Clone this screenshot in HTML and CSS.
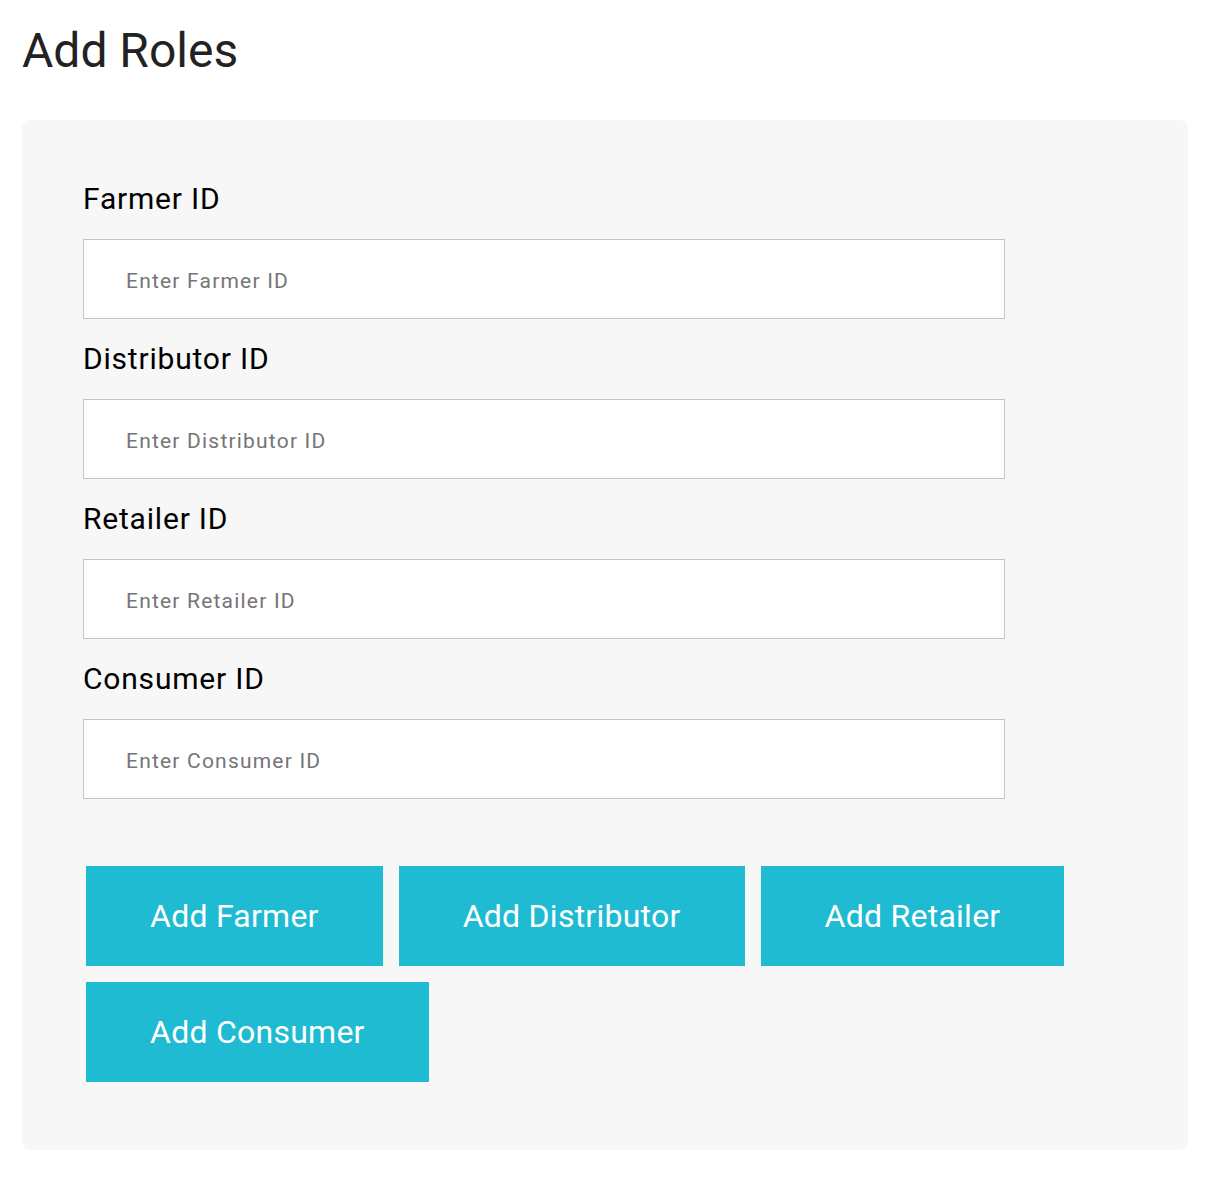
FILE: index.html
```html
<!DOCTYPE html>
<html lang="en">
<head>
<meta charset="utf-8">
<title>Add Roles</title>
<link rel="stylesheet" href="styles.css">
</head>
<body>
<main class="page">
  <h1 class="title">Add Roles</h1>
  <section class="panel">
    <form class="form">
      <label class="field-label" for="farmer">Farmer ID</label>
      <input class="field-input" id="farmer" type="text" placeholder="Enter Farmer ID">
      <label class="field-label" for="distributor">Distributor ID</label>
      <input class="field-input" id="distributor" type="text" placeholder="Enter Distributor ID">
      <label class="field-label" for="retailer">Retailer ID</label>
      <input class="field-input" id="retailer" type="text" placeholder="Enter Retailer ID">
      <label class="field-label" for="consumer">Consumer ID</label>
      <input class="field-input" id="consumer" type="text" placeholder="Enter Consumer ID">
      <div class="actions">
        <button class="btn" type="button">Add Farmer</button>
        <button class="btn" type="button">Add Distributor</button>
        <button class="btn" type="button">Add Retailer</button>
        <button class="btn" type="button">Add Consumer</button>
      </div>
    </form>
  </section>
</main>
</body>
</html>
```

FILE: styles.css
```css
* { box-sizing: border-box; }

html, body {
  margin: 0;
  padding: 0;
  background: #ffffff;
}

body {
  font-family: Roboto, "Liberation Sans", Arial, sans-serif;
}

.page {
  padding: 0 44px 0 22px;
}

.title {
  margin: 0;
  padding-top: 21px;
  height: 120px;
  font-size: 48px;
  line-height: 60px;
  font-weight: 400;
  color: #222222;
}

.panel {
  background: #f7f7f7;
  border-radius: 8px;
  padding: 61px 61px 68px 61px;
}

.form {
  display: flex;
  flex-direction: column;
  align-items: flex-start;
}

.field-label {
  font-size: 30px;
  line-height: 36px;
  letter-spacing: 0.8px;
  color: #000000;
  margin-bottom: 22px;
}

.field-input {
  width: 922px;
  height: 80px;
  border: 1px solid #c4c4c4;
  background: #ffffff;
  padding: 3px 0 0 42px;
  margin: 0 0 22px 0;
  font-family: Roboto, "Liberation Sans", Arial, sans-serif;
  font-size: 21px;
  letter-spacing: 1.2px;
  color: #333333;
  border-radius: 0;
  outline: none;
}

.field-input::placeholder {
  color: #757575;
}

.actions {
  display: flex;
  flex-wrap: wrap;
  gap: 16px;
  width: 1000px;
  margin-top: 45px;
  padding-left: 3px;
}

.btn {
  height: 100px;
  padding: 0 64px;
  border: none;
  border-radius: 0;
  background: #1fbbd2;
  color: #ffffff;
  font-family: Roboto, "Liberation Sans", Arial, sans-serif;
  font-size: 32px;
  letter-spacing: 0.25px;
  cursor: pointer;
}
```
